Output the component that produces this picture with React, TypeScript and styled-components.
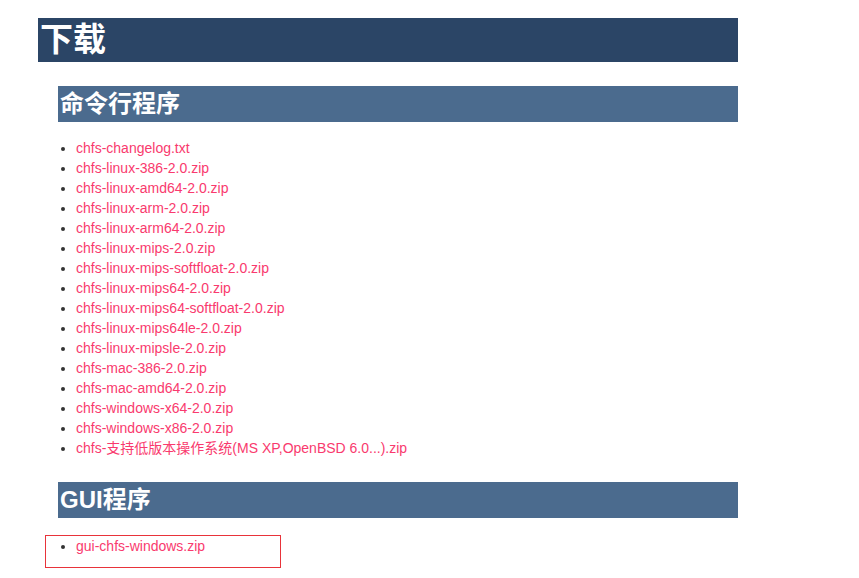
import React from 'react';
import styled, { createGlobalStyle } from 'styled-components';

const GlobalStyle = createGlobalStyle`
  body {
    margin: 8px;
    background: #ffffff;
    font-family: 'Liberation Sans', 'Noto Sans CJK SC', sans-serif;
  }
`;

const Page = styled.div`
  margin: 10px 0 0 30px;
  width: 700px;
`;

const Title = styled.h1`
  margin: 0;
  height: 44px;
  line-height: 44px;
  padding-left: 2px;
  background: #2b4566;
  color: #ffffff;
  font-size: 33px;
  font-weight: 700;
  font-family: 'Liberation Sans', 'Noto Sans CJK SC', sans-serif;
`;

const Section = styled.section`
  margin-left: 20px;
  padding-top: 24px;
`;

const SectionTitle = styled.h2`
  margin: 0;
  height: 36px;
  line-height: 36px;
  padding-left: 2px;
  background: #4b6b8e;
  color: #ffffff;
  font-size: 24px;
  font-weight: 700;
  font-family: 'Liberation Sans', 'Noto Sans CJK SC', sans-serif;
`;

const FileList = styled.ul<{ $boxed?: boolean }>`
  margin: ${p => (p.$boxed ? '17px 0 0 -13px' : '16px 0 0 0')};
  padding: 0 0 0 ${p => (p.$boxed ? '30px' : '18px')};
  list-style: disc;
  color: #333333;
  font-size: 14px;
  line-height: 20px;
  ${p =>
    p.$boxed &&
    `
    border: 1px solid #e8333a;
    width: 204px;
    height: 31px;
  `}
`;

const FileLink = styled.a`
  color: #f93a6e;
  text-decoration: none;
  font-family: 'Liberation Sans', 'Noto Sans CJK SC', sans-serif;
`;

const cliFiles = [
  'chfs-changelog.txt',
  'chfs-linux-386-2.0.zip',
  'chfs-linux-amd64-2.0.zip',
  'chfs-linux-arm-2.0.zip',
  'chfs-linux-arm64-2.0.zip',
  'chfs-linux-mips-2.0.zip',
  'chfs-linux-mips-softfloat-2.0.zip',
  'chfs-linux-mips64-2.0.zip',
  'chfs-linux-mips64-softfloat-2.0.zip',
  'chfs-linux-mips64le-2.0.zip',
  'chfs-linux-mipsle-2.0.zip',
  'chfs-mac-386-2.0.zip',
  'chfs-mac-amd64-2.0.zip',
  'chfs-windows-x64-2.0.zip',
  'chfs-windows-x86-2.0.zip',
  'chfs-支持低版本操作系统(MS XP,OpenBSD 6.0...).zip',
];

const guiFiles = ['gui-chfs-windows.zip'];

export default function App() {
  return (
    <>
      <GlobalStyle />
      <Page>
        <Title>下载</Title>
        <Section>
          <SectionTitle>命令行程序</SectionTitle>
          <FileList>
            {cliFiles.map(f => (
              <li key={f}>
                <FileLink href="#">{f}</FileLink>
              </li>
            ))}
          </FileList>
        </Section>
        <Section>
          <SectionTitle>GUI程序</SectionTitle>
          <FileList $boxed>
            {guiFiles.map(f => (
              <li key={f}>
                <FileLink href="#">{f}</FileLink>
              </li>
            ))}
          </FileList>
        </Section>
      </Page>
    </>
  );
}
